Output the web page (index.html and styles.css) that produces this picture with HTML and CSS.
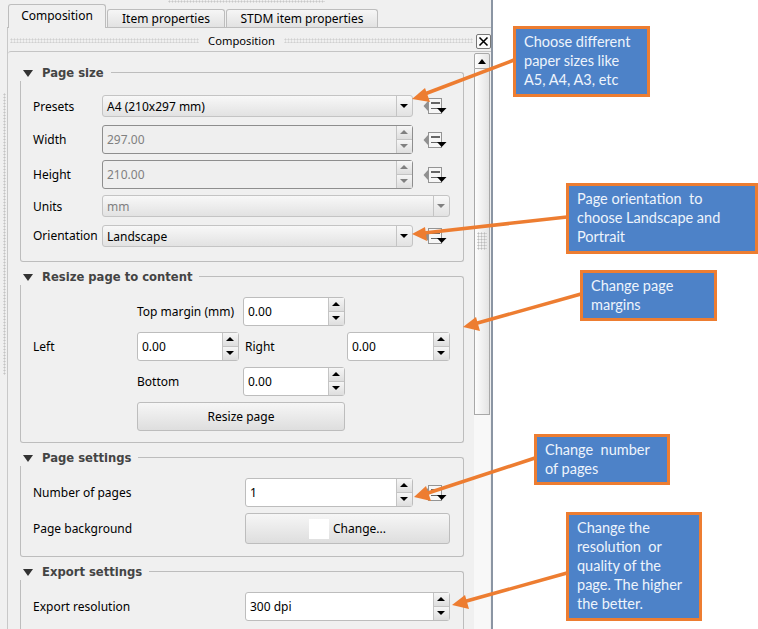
FILE: index.html
```html
<!DOCTYPE html>
<html lang="en">

<head>
    <meta charset="UTF-8">
    <meta name="viewport" content="width=device-width, initial-scale=1.0">
    <title>Composition panel</title>
    <link rel="stylesheet" href="styles.css">
</head>

<body>

    <svg class="defs" width="0" height="0">
        <symbol id="dd" viewBox="0 0 24 16">
            <path d="M0.5 8 L5 3 V13 Z" fill="#909090" />
            <rect x="5.5" y="0.5" width="13" height="15" fill="#f6f6f6" stroke="#949494" />
            <rect x="8" y="4" width="9" height="2" fill="#666" />
            <path d="M8 10.5 H15" stroke="#666" />
            <path d="M14 10 H23.5 L18.7 15 Z" fill="#000" />
        </symbol>
    </svg>

    <div class="panel">
        <div class="side-grip"></div>
        <div class="main">
            <div class="top-grip"></div>
            <div class="tabs">
                <div class="tab active">Composition</div>
                <div class="tab tab-item">Item properties</div>
                <div class="tab tab-stdm">STDM item properties</div>
            </div>
            <div class="body-wrap">
                <div class="dock-title">
                    <div class="dots dots-left"></div>
                    <span>Composition</span>
                    <div class="dots dots-right"></div>
                    <div class="close">
                        <svg width="11" height="11" viewBox="0 0 11 11">
                            <path d="M1.5 1.5 L9.5 9.5 M9.5 1.5 L1.5 9.5" stroke="#000" stroke-width="1.6" />
                        </svg>
                    </div>
                </div>
                <div class="frame">
                    <div class="content">

                        <section class="group">
                            <div class="group-head">
                                <i class="caret"></i>
                                <h2>Page size</h2>
                                <div class="group-line"></div>
                            </div>
                            <div class="group-body size-grid">
                                <label class="first-row">Presets</label>
                                <div class="combo first-row"><span>A4 (210x297 mm)</span><b></b></div>
                                <svg class="dd first-row"><use href="#dd" /></svg>

                                <label>Width</label>
                                <div class="spin off"><span>297.00</span><div class="spin-btns"><b class="up"></b><b class="down"></b></div></div>
                                <svg class="dd"><use href="#dd" /></svg>

                                <label>Height</label>
                                <div class="spin off"><span>210.00</span><div class="spin-btns"><b class="up"></b><b class="down"></b></div></div>
                                <svg class="dd"><use href="#dd" /></svg>

                                <label>Units</label>
                                <div class="combo off span-two"><span>mm</span><b></b></div>

                                <label>Orientation</label>
                                <div class="combo last-row"><span>Landscape</span><b></b></div>
                                <svg class="dd last-row"><use href="#dd" /></svg>
                            </div>
                        </section>

                        <section class="group">
                            <div class="group-head">
                                <i class="caret"></i>
                                <h2>Resize page to content</h2>
                                <div class="group-line"></div>
                            </div>
                            <div class="group-body resize-grid">
                                <label class="col-b">Top margin (mm)</label>
                                <div class="spin col-c"><span>0.00</span><div class="spin-btns"><b class="up"></b><b class="down"></b></div></div>

                                <label class="col-a">Left</label>
                                <div class="spin col-b"><span>0.00</span><div class="spin-btns"><b class="up"></b><b class="down"></b></div></div>
                                <label class="right-label">Right</label>
                                <div class="spin"><span>0.00</span><div class="spin-btns"><b class="up"></b><b class="down"></b></div></div>

                                <label class="col-b">Bottom</label>
                                <div class="spin col-c"><span>0.00</span><div class="spin-btns"><b class="up"></b><b class="down"></b></div></div>

                                <div class="btn resize-btn">Resize page</div>
                            </div>
                        </section>

                        <section class="group">
                            <div class="group-head">
                                <i class="caret"></i>
                                <h2>Page settings</h2>
                                <div class="group-line"></div>
                            </div>
                            <div class="group-body pages-grid">
                                <label>Number of pages</label>
                                <div class="num-row">
                                    <div class="spin num-spin"><span>1</span><div class="spin-btns"><b class="up"></b><b class="down"></b></div></div>
                                    <svg class="dd"><use href="#dd" /></svg>
                                </div>
                                <label>Page background</label>
                                <div class="btn change-btn"><i class="swatch"></i>Change...</div>
                            </div>
                        </section>

                        <section class="group">
                            <div class="group-head">
                                <i class="caret"></i>
                                <h2>Export settings</h2>
                                <div class="group-line"></div>
                            </div>
                            <div class="group-body pages-grid">
                                <label>Export resolution</label>
                                <div class="spin"><span>300 dpi</span><div class="spin-btns"><b class="up"></b><b class="down"></b></div></div>
                            </div>
                        </section>

                    </div>
                    <div class="scrollbar">
                        <div class="sb-btn"><i></i></div>
                        <div class="sb-handle"><div class="sb-dots"></div></div>
                        <div class="sb-track"></div>
                    </div>
                </div>
            </div>
        </div>
    </div>

    <div class="note note-1">Choose different<br>paper sizes like<br>A5, A4, A3, etc</div>
    <div class="note note-2">Page orientation&nbsp; to<br>choose Landscape and<br>Portrait</div>
    <div class="note note-3">Change page<br>margins</div>
    <div class="note note-4">Change&nbsp; number<br>of pages</div>
    <div class="note note-5">Change the<br>resolution&nbsp; or<br>quality of the<br>page. The higher<br>the better.</div>

    <svg class="arrows" width="758" height="629" viewBox="0 0 758 629">
        <g stroke="#ed7d31" stroke-width="3.5" fill="none">
            <path d="M514 60 L422 95" />
            <path d="M567 217 L424 233" />
            <path d="M581 294 L474 324" />
            <path d="M535 458 L425 494" />
            <path d="M567 573 L463 602" />
        </g>
        <g fill="#ed7d31">
            <path d="M412 99 L425 88 L430 102 Z" />
            <path d="M412 234 L425 227 L427 241 Z" />
            <path d="M463 327 L476 317 L480 331 Z" />
            <path d="M414 497 L426 486 L431 501 Z" />
            <path d="M452 605 L465 595 L469 609 Z" />
        </g>
    </svg>

</body>

</html>
```

FILE: styles.css
```css
* {
    margin: 0;
    padding: 0;
    box-sizing: border-box;
}

body {
    width: 758px;
    height: 629px;
    overflow: hidden;
    position: relative;
    background-color: #fff;
    font-family: "Noto Sans", sans-serif;
    font-size: 12px;
    color: #000;
}

.defs {
    position: absolute;
}

.panel {
    display: flex;
    width: 493px;
    height: 629px;
    background-color: #f0f0f0;
    border-right: 2px solid #8b95a3;
}

.side-grip {
    width: 3px;
    height: 282px;
    margin: 93px 1px 0 3px;
    background-image: radial-gradient(#c4c4c4 45%, transparent 50%);
    background-size: 3px 3px;
}

.main {
    flex: 1;
    min-width: 0;
    display: flex;
    flex-direction: column;
}

.top-grip {
    width: 157px;
    height: 3px;
    margin-left: 161px;
    background-image: radial-gradient(#c8c8c8 45%, transparent 50%);
    background-size: 3px 3px;
}

/* tabs */
.tabs {
    display: flex;
    align-items: flex-end;
    height: 25px;
    padding-left: 1px;
    border-bottom: 1px solid #bdbdbd;
    gap: 1px;
}

.tab {
    height: 18px;
    line-height: 18px;
    text-align: center;
    background: linear-gradient(#f6f6f6, #e2e2e2);
    border: 1px solid #bdbdbd;
    border-bottom: none;
    border-radius: 3px 3px 0 0;
}

.tab.active {
    width: 98px;
    height: 24px;
    line-height: 22px;
    margin-bottom: -1px;
    background: #f0f0f0;
    position: relative;
}

.tab-item {
    width: 118px;
}

.tab-stdm {
    width: 152px;
}

.body-wrap {
    flex: 1;
    min-height: 0;
    display: flex;
    flex-direction: column;
    border-left: 1px solid #c8c8c8;
}

/* dock title */
.dock-title {
    display: flex;
    align-items: center;
    height: 23px;
    padding-left: 2px;
}

.dots {
    height: 5px;
    background-image: radial-gradient(#d0d0d0 45%, transparent 50%);
    background-size: 3px 3px;
}

.dots-left {
    width: 190px;
    margin-top: 2px;
}

.dock-title span {
    width: 85px;
    font-size: 11.2px;
    text-align: center;
    margin-top: 2px;
}

.dots-right {
    width: 190px;
    margin-top: 2px;
}

.close {
    width: 15px;
    height: 15px;
    margin-left: 3px;
    margin-top: 3px;
    display: flex;
    align-items: center;
    justify-content: center;
    background-color: #fafafa;
    border: 1px solid #777;
    border-radius: 2px;
}

.frame {
    flex: 1;
    min-height: 0;
    display: flex;
    border-top: 1px solid #c4c4c4;
    border-top-left-radius: 3px;
}

.content {
    width: 466px;
    padding: 12px 10px 0 12px;
}

/* groups */
.group {
    margin-bottom: 6px;
}

.group-head {
    display: flex;
    height: 17px;
    align-items: flex-start;
}

.caret {
    width: 0;
    height: 0;
    margin: 6px 9px 0 3px;
    border-left: 5px solid transparent;
    border-right: 5px solid transparent;
    border-top: 7px solid #333;
}

.group-head h2 {
    font-family: "DejaVu Sans", sans-serif;
    font-size: 11.6px;
    line-height: 18px;
    color: #444;
    margin-right: 7px;
}

.group-line {
    flex: 1;
    align-self: stretch;
    margin-top: 8px;
    border-top: 1px solid #bdbdbd;
    border-right: 1px solid #bdbdbd;
    border-top-right-radius: 3px;
}

.group-body {
    display: grid;
    align-items: center;
    padding: 14px 13px 14px 12px;
    border: 1px solid #bdbdbd;
    border-top: none;
    border-radius: 0 0 3px 3px;
}

label {
    line-height: 15px;
}

.size-grid {
    grid-template-columns: 69px 311px 37px;
    grid-auto-rows: auto;
    row-gap: 6px;
}

.first-row {
    margin-bottom: 2px;
}

.last-row {
    margin-top: 2px;
}

.resize-grid {
    grid-template-columns: 102px 102px 104px 103px;
    column-gap: 2px;
    row-gap: 6px;
    padding-top: 12px;
    padding-bottom: 11px;
}

.col-a {
    grid-column: 1;
}

.col-b {
    grid-column: 2;
}

.col-c {
    grid-column: 3;
    margin-left: 2px;
}

.right-label {
    padding-left: 4px;
}

.resize-btn {
    grid-column: 2 / 4;
}

.pages-grid {
    grid-template-columns: 212px 205px;
    row-gap: 6px;
    padding-top: 12px;
    padding-bottom: 12px;
}

.num-row {
    display: flex;
    align-items: center;
}

.num-spin {
    width: 168px;
    flex: none;
}

/* inputs */
.combo {
    display: flex;
    height: 22px;
    line-height: 21px;
    padding-left: 4px;
    background: linear-gradient(#f8f8f8, #e2e2e2);
    border: 1px solid #c4c4c4;
    border-radius: 3px;
}

.combo span {
    flex: 1;
}

.combo b {
    position: relative;
    width: 16px;
    border-left: 1px solid #c4c4c4;
}

.combo b::after {
    content: "";
    position: absolute;
    left: 3px;
    top: 8px;
    border-left: 4px solid transparent;
    border-right: 4px solid transparent;
    border-top: 4px solid #000;
}

.combo.off {
    color: #808080;
}

.combo.off b::after {
    border-top-color: #808080;
}

.span-two {
    grid-column: 2 / 4;
}

.spin {
    display: flex;
    height: 29px;
    line-height: 28px;
    padding-left: 4px;
    background-color: #fff;
    border: 1px solid #bdbdbd;
    border-radius: 3px;
}

.spin span {
    flex: 1;
}

.spin-btns {
    display: flex;
    flex-direction: column;
    width: 16px;
}

.spin-btns b {
    flex: 1;
    position: relative;
    background: linear-gradient(#f6f6f6, #dedede);
    border-left: 1px solid #c4c4c4;
}

.spin-btns .down {
    border-top: 1px solid #c4c4c4;
}

.spin-btns b::after {
    content: "";
    position: absolute;
    left: 3px;
    top: 4px;
    border-left: 4px solid transparent;
    border-right: 4px solid transparent;
}

.spin-btns .up::after {
    border-bottom: 4px solid #000;
}

.spin-btns .down::after {
    border-top: 4px solid #000;
}

.spin.off {
    color: #808080;
    background-color: #efefef;
    border: 1.5px solid #8e8e8e;
}

.spin.off .up::after {
    border-bottom-color: #808080;
}

.spin.off .down::after {
    border-top-color: #808080;
}

.dd {
    width: 24px;
    height: 16px;
    margin-left: 10px;
}

.btn {
    display: flex;
    align-items: center;
    justify-content: center;
    height: 29px;
    background: linear-gradient(#f6f6f6, #dedede);
    border: 1px solid #bdbdbd;
    border-radius: 3px;
}

.change-btn {
    height: 31px;
}

.swatch {
    width: 20px;
    height: 20px;
    margin-right: 4px;
    background-color: #fff;
}

/* scrollbar */
.scrollbar {
    width: 16px;
    margin-top: 1px;
    display: flex;
    flex-direction: column;
}

.sb-btn {
    height: 16px;
    display: flex;
    align-items: center;
    justify-content: center;
    background: linear-gradient(90deg, #fdfdfd, #e6e6e6);
    border: 1px solid #a8a8a8;
    border-radius: 2px 2px 0 0;
}

.sb-btn i {
    border-left: 4px solid transparent;
    border-right: 4px solid transparent;
    border-bottom: 5px solid #000;
}

.sb-handle {
    height: 346px;
    padding-top: 163px;
    background: linear-gradient(90deg, #fdfdfd, #e4e4e4);
    border: 1px solid #a8a8a8;
    border-top: none;
}

.sb-dots {
    width: 10px;
    height: 18px;
    margin-left: 2px;
    background-image: radial-gradient(#bbb 45%, transparent 50%);
    background-size: 3px 3px;
}

.sb-track {
    flex: 1;
    background-color: #f8f8f8;
    background-image: radial-gradient(#d0d0d0 40%, transparent 45%);
    background-size: 2px 2px;
}

/* annotations over the screenshot */
.note {
    position: absolute;
    padding: 3px 8px;
    font-family: "Lato", sans-serif;
    font-size: 14.5px;
    line-height: 19px;
    color: #eef4fc;
    background-color: #4d82c8;
    border: 3px solid #ed7d31;
}

.note-1 {
    left: 513px;
    top: 26px;
    width: 137px;
    height: 71px;
}

.note-2 {
    left: 566px;
    top: 183px;
    width: 192px;
    height: 71px;
}

.note-3 {
    left: 580px;
    top: 270px;
    width: 137px;
    height: 51px;
}

.note-4 {
    left: 534px;
    top: 434px;
    width: 136px;
    height: 51px;
}

.note-5 {
    left: 566px;
    top: 512px;
    width: 136px;
    height: 109px;
}

.arrows {
    position: absolute;
    left: 0;
    top: 0;
}
```
